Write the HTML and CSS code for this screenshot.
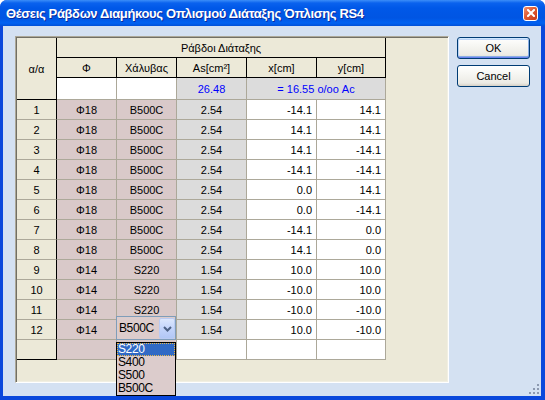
FILE: index.html
```html
<!DOCTYPE html>
<html>
<head>
<meta charset="utf-8">
<link rel="stylesheet" href="styles.css">
</head>
<body>
<div class="window">
  <div class="titlebar">
    <span class="title">Θέσεις Ράβδων Διαμήκους Οπλισμού Διάταξης Όπλισης RS4</span>
    <span class="close"><svg width="8" height="8" viewBox="0 0 8 8"><path d="M1 1L7 7M7 1L1 7" stroke="#fff" stroke-width="2" stroke-linecap="square"/></svg></span>
  </div>
  <div class="client">
    <div class="panel">
      <div class="sheet">
        <div class="c h rowspan3">α/α</div>
        <div class="c h colspan5">Ράβδοι Διάταξης</div>
        <div class="c h">Φ</div>
        <div class="c h">Χάλυβας</div>
        <div class="c h">As[cm²]</div>
        <div class="c h">x[cm]</div>
        <div class="c h">y[cm]</div>
        <div class="c wh"></div>
        <div class="c wh"></div>
        <div class="c gr blue">26.48</div>
        <div class="c gr blue colspan2">= 16.55 ο/οο Ac</div>

        <div class="c rh">1</div><div class="c pk">Φ18</div><div class="c pk">B500C</div><div class="c gr">2.54</div><div class="c wh num">-14.1</div><div class="c wh num">14.1</div>
        <div class="c rh">2</div><div class="c pk">Φ18</div><div class="c pk">B500C</div><div class="c gr">2.54</div><div class="c wh num">14.1</div><div class="c wh num">14.1</div>
        <div class="c rh">3</div><div class="c pk">Φ18</div><div class="c pk">B500C</div><div class="c gr">2.54</div><div class="c wh num">14.1</div><div class="c wh num">-14.1</div>
        <div class="c rh">4</div><div class="c pk">Φ18</div><div class="c pk">B500C</div><div class="c gr">2.54</div><div class="c wh num">-14.1</div><div class="c wh num">-14.1</div>
        <div class="c rh">5</div><div class="c pk">Φ18</div><div class="c pk">B500C</div><div class="c gr">2.54</div><div class="c wh num">0.0</div><div class="c wh num">14.1</div>
        <div class="c rh">6</div><div class="c pk">Φ18</div><div class="c pk">B500C</div><div class="c gr">2.54</div><div class="c wh num">0.0</div><div class="c wh num">-14.1</div>
        <div class="c rh">7</div><div class="c pk">Φ18</div><div class="c pk">B500C</div><div class="c gr">2.54</div><div class="c wh num">-14.1</div><div class="c wh num">0.0</div>
        <div class="c rh">8</div><div class="c pk">Φ18</div><div class="c pk">B500C</div><div class="c gr">2.54</div><div class="c wh num">14.1</div><div class="c wh num">0.0</div>
        <div class="c rh">9</div><div class="c pk">Φ14</div><div class="c pk">S220</div><div class="c gr">1.54</div><div class="c wh num">10.0</div><div class="c wh num">10.0</div>
        <div class="c rh">10</div><div class="c pk">Φ14</div><div class="c pk">S220</div><div class="c gr">1.54</div><div class="c wh num">-10.0</div><div class="c wh num">10.0</div>
        <div class="c rh">11</div><div class="c pk">Φ14</div><div class="c pk">S220</div><div class="c gr">1.54</div><div class="c wh num">-10.0</div><div class="c wh num">-10.0</div>
        <div class="c rh">12</div><div class="c pk">Φ14</div><div class="c pk"></div><div class="c gr">1.54</div><div class="c wh num">10.0</div><div class="c wh num">-10.0</div>
        <div class="c rh last"></div><div class="c pk"></div><div class="c pk"></div><div class="c wh"></div><div class="c wh"></div><div class="c wh"></div>

        <div class="combo">
          <span class="combo-text">B500C</span>
          <span class="combo-btn"><svg width="9" height="6" viewBox="0 0 9 6"><path d="M1 1L4.5 4.5L8 1" fill="none" stroke="#4D6185" stroke-width="2"/></svg></span>
        </div>
        <div class="droplist">
          <div class="item sel">S220</div>
          <div class="item">S400</div>
          <div class="item">S500</div>
          <div class="item">B500C</div>
        </div>
      </div>
    </div>
    <div class="buttons">
      <div class="btn default">OK</div>
      <div class="btn">Cancel</div>
    </div>
    <svg class="grip" width="12" height="12" viewBox="0 0 12 12">
      <rect x="9" y="1" width="2" height="2" fill="#8C99B0"/>
      <rect x="5" y="5" width="2" height="2" fill="#8C99B0"/>
      <rect x="9" y="5" width="2" height="2" fill="#8C99B0"/>
      <rect x="1" y="9" width="2" height="2" fill="#8C99B0"/>
      <rect x="5" y="9" width="2" height="2" fill="#8C99B0"/>
      <rect x="9" y="9" width="2" height="2" fill="#8C99B0"/>
    </svg>
  </div>
</div>
</body>
</html>
```

FILE: styles.css
```css
html, body {
  margin: 0;
  padding: 0;
  background: #ffffff;
}

.window {
  width: 545px;
  height: 400px;
  display: flex;
  flex-direction: column;
  background: #0A48DC;
  border-radius: 7px 7px 0 0;
  overflow: hidden;
  font-family: "Liberation Sans", Arial, sans-serif;
}

.titlebar {
  height: 26px;
  flex: none;
  display: flex;
  align-items: center;
  justify-content: space-between;
  padding: 0 7px 0 6px;
  background: linear-gradient(to bottom, #3C8EF8 0px, #0A62EE 3px, #0058E8 8px, #0055E3 18px, #0062F2 23px, #0050D8 26px);
}

.title {
  color: #ffffff;
  font-weight: bold;
  font-size: 13px;
  letter-spacing: -0.35px;
  text-shadow: 1px 1px 0 #0A2A9C;
  white-space: nowrap;
}

.close {
  width: 15px;
  height: 15px;
  box-sizing: border-box;
  border: 1px solid #ffffff;
  border-radius: 3px;
  background: linear-gradient(135deg, #F08E6E 0%, #E05B32 45%, #C6381A 100%);
  display: flex;
  align-items: center;
  justify-content: center;
}

.client {
  flex: 1;
  margin: 0 4px 4px 3px;
  background: #D4E1F2;
  display: flex;
  align-items: flex-start;
  gap: 8px;
  padding: 10px 0 0 12px;
  position: relative;
}

.panel {
  width: 434px;
  height: 347px;
  box-sizing: border-box;
  background: #ECE9D8;
  border: 1px solid;
  border-color: #ACA899 #FFFFFF #FFFFFF #ACA899;
  box-shadow: inset 1px 1px 0 #716F64, inset -1px -1px 0 #F1EFE2;
  padding: 1px 0 0 1px;
}

.sheet {
  position: relative;
  display: grid;
  grid-template-columns: 40px 60px 60px 70px 70px 69px;
  grid-template-rows: 20px 20px 22px repeat(13, 20px);
  width: 369px;
  font-size: 11px;
  color: #000000;
}

.c {
  box-sizing: border-box;
  border-right: 1px solid #ACA899;
  border-bottom: 1px solid #ACA899;
  display: flex;
  align-items: center;
  justify-content: center;
  white-space: nowrap;
  overflow: hidden;
}

.h {
  background: #ECE9D8;
  border-color: #000000;
}

.rowspan3 {
  grid-row: span 3;
}

.colspan5 {
  grid-column: span 5;
}

.colspan2 {
  grid-column: span 2;
}

.rh {
  background: #ECE9D8;
  border-right-color: #000000;
}

.rh.last {
  border-bottom-color: #000000;
}

.pk {
  background: #D9C9C9;
}

.gr {
  background: #DCDCDC;
}

.wh {
  background: #FFFFFF;
}

.blue {
  color: #0000FF;
}

.num {
  justify-content: flex-end;
  padding-right: 4px;
}

.combo {
  position: absolute;
  left: 99px;
  top: 278px;
  width: 60px;
  height: 24px;
  box-sizing: border-box;
  border: 1px solid #7F9DB9;
  background: #DCCCCC;
  display: flex;
  align-items: center;
  padding-left: 2px;
}

.combo-text {
  font-size: 12px;
  letter-spacing: -0.4px;
}

.combo-btn {
  position: absolute;
  right: 0;
  top: 1px;
  width: 16px;
  height: 21px;
  box-sizing: border-box;
  border: 1px solid #BACBF3;
  border-radius: 2px;
  background: linear-gradient(to bottom, #DCE7FD 0%, #C3D4FB 50%, #B2C7F6 100%);
  display: flex;
  align-items: center;
  justify-content: center;
}

.droplist {
  position: absolute;
  left: 99px;
  top: 304px;
  width: 60px;
  box-sizing: border-box;
  border: 1px solid #000000;
  background: #DCCCCC;
  display: flex;
  flex-direction: column;
}

.item {
  height: 13px;
  line-height: 13px;
  font-size: 12px;
  letter-spacing: -0.4px;
  padding-left: 1px;
}

.item.sel {
  background: #316AC5;
  color: #FFFFFF;
  outline: 1px dotted #E8B84E;
  outline-offset: -1px;
}

.buttons {
  display: flex;
  flex-direction: column;
  gap: 6px;
  margin-top: 1px;
}

.btn {
  width: 73px;
  height: 22px;
  box-sizing: border-box;
  border: 1px solid #003C74;
  border-radius: 3px;
  background: linear-gradient(to bottom, #FFFFFF 0%, #F6F6F2 40%, #ECEBE5 85%, #D6D0C5 100%);
  font-size: 11px;
  display: flex;
  align-items: center;
  justify-content: center;
  color: #000000;
}

.btn.default {
  box-shadow: inset 0 1px 0 #CEE7FF, inset 0 -1px 0 #6982EE, inset 1px 0 0 #BCD4F6, inset -1px 0 0 #89ADE4, inset 0 2px 0 #BCD4F6, inset 0 -2px 0 #89ADE4;
}

.grip {
  position: absolute;
  right: 1px;
  bottom: 1px;
}
```
